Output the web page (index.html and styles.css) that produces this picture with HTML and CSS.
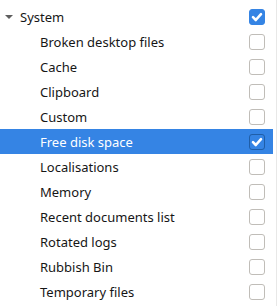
FILE: index.html
```html
<!DOCTYPE html>
<html lang="en">
<head>
    <meta charset="UTF-8">
    <meta name="viewport" content="width=device-width, initial-scale=1.0">
    <title>Cleanup</title>
    <link rel="stylesheet" href="styles.css">
</head>
<body>
    <div class="view">
        <ul class="tree">
            <li class="row parent">
                <span class="expander"></span>
                <span class="label">System</span>
                <span class="check checked"><svg viewBox="0 0 14 14" width="14" height="14"><path d="M3 7.2 L5.8 10 L11 4.2" fill="none" stroke="#fff" stroke-width="2.6" stroke-linecap="round" stroke-linejoin="round"/></svg></span>
            </li>
            <li class="row child"><span class="label">Broken desktop files</span><span class="check"></span></li>
            <li class="row child"><span class="label">Cache</span><span class="check"></span></li>
            <li class="row child"><span class="label">Clipboard</span><span class="check"></span></li>
            <li class="row child"><span class="label">Custom</span><span class="check"></span></li>
            <li class="row child selected"><span class="label">Free disk space</span><span class="check checked"><svg viewBox="0 0 14 14" width="14" height="14"><path d="M3 7.2 L5.8 10 L11 4.2" fill="none" stroke="#fff" stroke-width="2.6" stroke-linecap="round" stroke-linejoin="round"/></svg></span></li>
            <li class="row child"><span class="label">Localisations</span><span class="check"></span></li>
            <li class="row child"><span class="label">Memory</span><span class="check"></span></li>
            <li class="row child"><span class="label">Recent documents list</span><span class="check"></span></li>
            <li class="row child"><span class="label">Rotated logs</span><span class="check"></span></li>
            <li class="row child"><span class="label">Rubbish Bin</span><span class="check"></span></li>
            <li class="row child"><span class="label">Temporary files</span><span class="check"></span></li>
        </ul>
        <div class="scrollbar"></div>
    </div>
</body>
</html>
```

FILE: styles.css
```css
body {
    margin: 0;
    background: #ffffff;
    font-family: "Noto Sans", sans-serif;
    font-size: 13px;
    color: #161616;
}
.view {
    display: flex;
    height: 306px;
}
.tree {
    list-style: none;
    margin: 0;
    padding: 4px 0 0 0;
    width: 273px;
}
.row {
    display: flex;
    align-items: center;
    height: 25px;
}
.parent {
    padding-left: 5px;
}
.child {
    padding-left: 40px;
}
.expander {
    width: 0;
    height: 0;
    border-left: 4px solid transparent;
    border-right: 4px solid transparent;
    border-top: 4px solid #5e5e5e;
    margin-right: 7px;
}
.label {
    flex: 1;
}
.check {
    width: 14px;
    height: 14px;
    border: 1px solid #c0bdb8;
    border-radius: 3px;
    background: #ffffff;
    margin-right: 8px;
}
.check svg {
    display: block;
}
.check.checked {
    background: #3584e4;
    border-color: #3584e4;
}
.selected {
    background: #3584e4;
    color: #ffffff;
}
.selected .check.checked {
    border-color: #1f5ea8;
}
.scrollbar {
    margin-left: 3px;
    width: 1px;
    background: #e8e8e7;
}
```
